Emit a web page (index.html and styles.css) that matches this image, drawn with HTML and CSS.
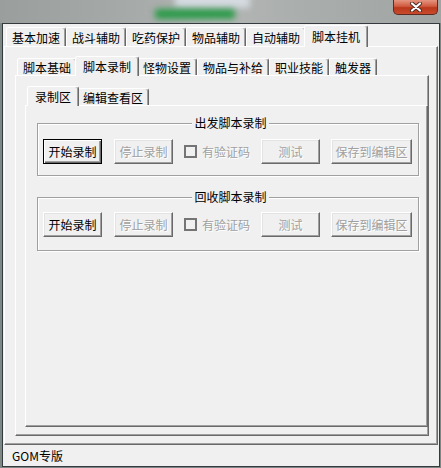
FILE: index.html
```html
<!DOCTYPE html>
<html lang="zh-CN">
<head>
    <meta charset="UTF-8">
    <title>脚本挂机</title>
    <link rel="stylesheet" href="styles.css">
</head>
<body>
    <div class="titlebar">
        <div class="glow glow-light"></div>
        <div class="glow glow-green"></div>
        <div class="close">
            <svg width="14" height="10" viewBox="0 0 14 10">
                <path d="M3 1.5 L11 8.5 M11 1.5 L3 8.5" stroke="#4a2a24" stroke-width="4" stroke-linecap="round"/>
                <path d="M3 1.5 L11 8.5 M11 1.5 L3 8.5" stroke="#fff" stroke-width="2.2" stroke-linecap="round"/>
            </svg>
        </div>
    </div>

    <div class="window">
        <div class="client">
            <div class="tabs tabs-main">
                <div class="tab">基本加速</div>
                <div class="tab">战斗辅助</div>
                <div class="tab">吃药保护</div>
                <div class="tab">物品辅助</div>
                <div class="tab">自动辅助</div>
                <div class="tab active">脚本挂机</div>
            </div>

            <div class="panel panel-main">
                <div class="tabs tabs-sub">
                    <div class="tab">脚本基础</div>
                    <div class="tab active">脚本录制</div>
                    <div class="tab">怪物设置</div>
                    <div class="tab">物品与补给</div>
                    <div class="tab">职业技能</div>
                    <div class="tab">触发器</div>
                </div>

                <div class="panel panel-sub">
                    <div class="tabs tabs-sub">
                        <div class="tab active">录制区</div>
                        <div class="tab">编辑查看区</div>
                    </div>

                    <div class="panel panel-inner">
                        <fieldset class="group">
                            <legend>出发脚本录制</legend>
                            <div class="row">
                                <button class="btn default">开始录制</button>
                                <button class="btn" disabled>停止录制</button>
                                <label class="check disabled"><span class="box"></span>有验证码</label>
                                <button class="btn" disabled>测试</button>
                                <button class="btn wide" disabled>保存到编辑区</button>
                            </div>
                        </fieldset>

                        <fieldset class="group group-second">
                            <legend>回收脚本录制</legend>
                            <div class="row">
                                <button class="btn">开始录制</button>
                                <button class="btn" disabled>停止录制</button>
                                <label class="check disabled"><span class="box"></span>有验证码</label>
                                <button class="btn" disabled>测试</button>
                                <button class="btn wide" disabled>保存到编辑区</button>
                            </div>
                        </fieldset>
                    </div>
                </div>
            </div>

            <div class="statusbar">GOM专版</div>
        </div>
    </div>
</body>
</html>
```

FILE: styles.css
```css
body {
    margin: 0;
    width: 441px;
    height: 468px;
    overflow: hidden;
    background: #7d8784;
    font-family: "Noto Sans CJK SC", "Liberation Sans", sans-serif;
    font-size: 12px;
    color: #000;
}

.titlebar {
    position: relative;
    height: 23px;
    display: flex;
    justify-content: flex-end;
    background: linear-gradient(90deg, #9a9f9d 0%, #a6aaa8 30%, #b3b6b4 50%, #a9adab 70%, #a0a4a2 100%);
    overflow: hidden;
}
.glow {
    position: absolute;
    filter: blur(3px);
}
.glow-green {
    left: 155px;
    top: 9px;
    width: 80px;
    height: 10px;
    background: #2a9a48;
    border-radius: 3px;
}
.glow-light {
    left: 175px;
    top: -6px;
    width: 75px;
    height: 14px;
    background: #d4dae0;
}
.close {
    position: relative;
    width: 45px;
    height: 15px;
    margin-right: 3px;
    box-sizing: border-box;
    border: 1px solid #5d2b22;
    border-top: none;
    border-radius: 0 0 5px 5px;
    background: linear-gradient(#e59580, #d05a40 45%, #b9381c 55%, #c94a2c);
    display: flex;
    align-items: center;
    justify-content: center;
}

.window {
    height: 444px;
    margin: 0 1px 0 2px;
    box-sizing: border-box;
    border: 1px solid #343a3d;
}
.client {
    height: 100%;
    background: #f0f0f0;
    display: flex;
    flex-direction: column;
}

/* tabs */
.tabs {
    display: flex;
    align-items: flex-end;
    padding-left: 2px;
}
.tabs-main {
    padding-left: 3px;
    padding-top: 1px;
}
.tab {
    box-sizing: border-box;
    padding: 0 5px;
    border: 1px solid;
    border-bottom: none;
    border-color: #fff #696969 transparent #fff;
    border-radius: 2px 3px 0 0;
    box-shadow: inset -1px 0 #a0a0a0;
    background: #f0f0f0;
    white-space: nowrap;
    display: flex;
    align-items: center;
    justify-content: center;
}
.tabs-main .tab {
    height: 19px;
}
.tabs-sub .tab {
    height: 17px;
}
.tab.active {
    position: relative;
    z-index: 1;
    margin: 0 -2px -1px;
    padding: 0 7px 1px;
}
.tab.active:first-child {
    margin-left: 0;
}
.tabs-main .tab.active {
    height: 22px;
}
.tabs-sub .tab.active {
    height: 20px;
}

/* panels */
.panel {
    box-sizing: border-box;
    border: 1px solid;
    border-color: #fff #696969 #696969 #fff;
    box-shadow: inset -1px -1px #a0a0a0;
    display: flex;
    flex-direction: column;
}
.panel-main {
    flex: 1;
    margin: 0 1px;
    padding: 9px 8px 8px 10px;
}
.panel-sub {
    flex: 1;
    padding: 10px 0 8px 9px;
}
.panel-inner {
    flex: 1;
    padding: 10px 8px 0 11px;
}

/* group boxes */
.group {
    margin: 0;
    padding: 9px 0 11px 5px;
    border: 1px solid #a0a0a0;
    box-shadow: 1px 1px 0 #fff, inset 1px 1px 0 #fff;
}
.group legend {
    margin: 0 auto;
    padding: 0 2px;
    line-height: 14px;
    background: #f0f0f0;
}
.group-second {
    margin-top: 14px;
    padding-top: 8px;
    padding-bottom: 13px;
}
.row {
    display: flex;
    align-items: center;
}

.btn {
    box-sizing: border-box;
    width: 59px;
    height: 25px;
    padding: 0;
    margin-left: 11px;
    font: inherit;
    color: #000;
    background: #f0f0f0;
    border: 1px solid;
    border-color: #fff #696969 #696969 #fff;
    box-shadow: inset -1px -1px #a0a0a0, inset 1px 1px #e3e3e3;
}
.btn:first-child {
    margin-left: 0;
}
.btn:nth-child(2) {
    margin-left: 12px;
}
.btn.wide {
    width: 81px;
}
.btn.default {
    border-color: #000;
    box-shadow: inset 1px 1px #fff, inset -1px -1px #696969, inset -2px -2px #a0a0a0;
}
.btn:disabled {
    color: #a0a0a0;
    text-shadow: 1px 1px 0 #fff;
}

.check {
    display: flex;
    align-items: center;
    margin-left: 11px;
}
.check .box {
    box-sizing: border-box;
    width: 13px;
    height: 13px;
    margin-right: 5px;
    border: 2px solid #747474;
    background: #f0f0f0;
}
.check.disabled {
    color: #a0a0a0;
    text-shadow: 1px 1px 0 #fff;
}

.statusbar {
    height: 21px;
    line-height: 21px;
    padding-left: 9px;
}
```
